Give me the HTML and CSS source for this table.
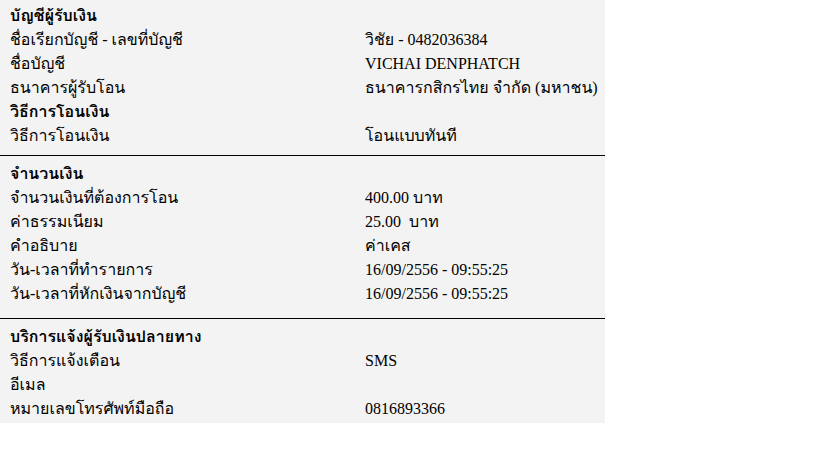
FILE: index.html
```html
<!DOCTYPE html>
<html lang="th">
<head>
<meta charset="utf-8">
<link rel="stylesheet" href="styles.css">
</head>
<body>
<div class="panel">
  <div class="section s1">
    <div class="row head"><span class="label">บัญชีผู้รับเงิน</span><span class="value"></span></div>
    <div class="row"><span class="label">ชื่อเรียกบัญชี - เลขที่บัญชี</span><span class="value">วิชัย - 0482036384</span></div>
    <div class="row"><span class="label">ชื่อบัญชี</span><span class="value">VICHAI DENPHATCH</span></div>
    <div class="row"><span class="label">ธนาคารผู้รับโอน</span><span class="value">ธนาคารกสิกรไทย จำกัด (มหาชน)</span></div>
    <div class="row head"><span class="label">วิธีการโอนเงิน</span><span class="value"></span></div>
    <div class="row"><span class="label">วิธีการโอนเงิน</span><span class="value">โอนแบบทันที</span></div>
  </div>
  <div class="section s2">
    <div class="row head"><span class="label">จำนวนเงิน</span><span class="value"></span></div>
    <div class="row"><span class="label">จำนวนเงินที่ต้องการโอน</span><span class="value">400.00 บาท</span></div>
    <div class="row"><span class="label">ค่าธรรมเนียม</span><span class="value">25.00&nbsp; บาท</span></div>
    <div class="row"><span class="label">คำอธิบาย</span><span class="value">ค่าเคส</span></div>
    <div class="row"><span class="label">วัน-เวลาที่ทำรายการ</span><span class="value">16/09/2556 - 09:55:25</span></div>
    <div class="row"><span class="label">วัน-เวลาที่หักเงินจากบัญชี</span><span class="value">16/09/2556 - 09:55:25</span></div>
  </div>
  <div class="section s3">
    <div class="row head"><span class="label">บริการแจ้งผู้รับเงินปลายทาง</span><span class="value"></span></div>
    <div class="row"><span class="label">วิธีการแจ้งเตือน</span><span class="value">SMS</span></div>
    <div class="row"><span class="label">อีเมล</span><span class="value"></span></div>
    <div class="row"><span class="label">หมายเลขโทรศัพท์มือถือ</span><span class="value">0816893366</span></div>
  </div>
</div>
</body>
</html>
```
FILE: styles.css
```css
html, body {
  margin: 0;
  padding: 0;
  background: #ffffff;
}
body {
  font-family: "Liberation Serif", Tahoma, Loma, serif;
  font-size: 16px;
  color: #000000;
}
.panel {
  width: 605px;
  background: #f3f3f3;
}
.section {
  display: flex;
  flex-direction: column;
}
.s1 {
  padding: 4px 0 7px;
  border-bottom: 1px solid #000000;
}
.s2 {
  padding: 6px 0 12px;
  border-bottom: 1px solid #000000;
}
.s3 {
  padding: 6px 0 2px;
}
.row {
  display: grid;
  grid-template-columns: 355px 1fr;
  height: 24px;
  line-height: 24px;
  padding-left: 10px;
  white-space: nowrap;
}
.head .label {
  font-weight: bold;
}
```
